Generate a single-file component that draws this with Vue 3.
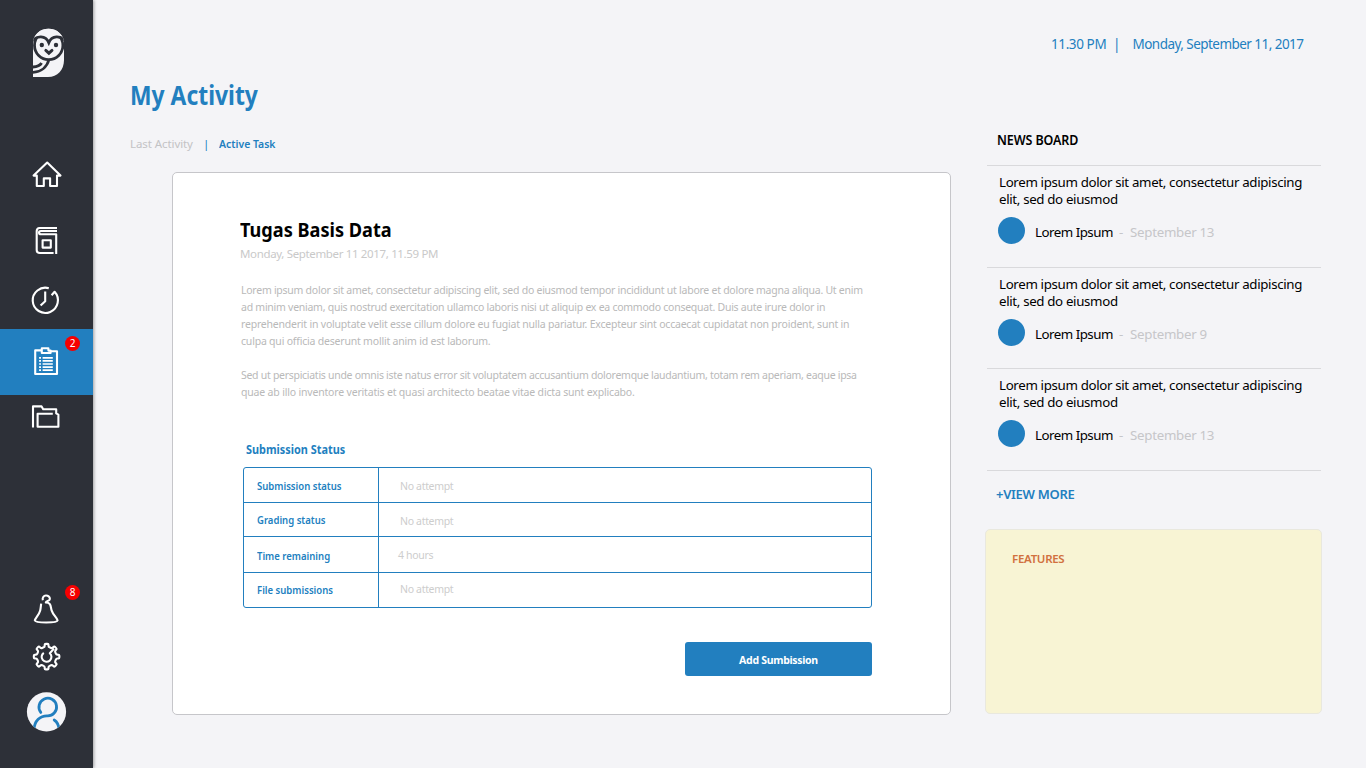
<script setup>
const nav = [
  {
    id: 'home', y: 142, h: 66,
    paths: ['M33.6 175.6L47.2 162.5L60.5 175.6H57V186H50.1V178.4H43.8V186H36.8V175.6H33.6Z']
  },
  {
    id: 'book', y: 208, h: 66,
    paths: [
      'M57 228H39.6Q36.7 228.2 36.7 231V250.2Q36.8 253 39.8 253H53.6',
      'M57 231H41Q39 231 39 232.4Q39 234.2 41 234.2H56.2V254',
      'M42.6 240.2H50.8V247.6H42.6Z'
    ]
  },
  {
    id: 'clock', y: 274, h: 55,
    paths: [
      'M48.8 288.2A12.6 12.6 0 1 0 54.6 291.8L51.6 295.2',
      'M45.2 291.6V301.2L40.6 305.6'
    ]
  },
  {
    id: 'tasks', y: 329, h: 66, active: true, badge: 2,
    paths: [
      'M41.8 350.4H35.2V374H57V351.2H50.6',
      'M41.8 353V348.2H48.4V350.6H50.6V353H41.8Z',
      'M42.6 357.8H52.8M42.6 360.9H52.8M42.6 364H52.8M42.6 367.1H52.8M42.6 370.2H52.8',
      'M39.1 357.8H41M39.1 360.9H41M39.1 364H41M39.1 367.1H41M39.1 370.2H41'
    ]
  },
  {
    id: 'files', y: 395, h: 46,
    paths: [
      'M33 427.4V406.4H41.6L43.2 409.2H56.2V413.4L58.4 414.6V426.8H37.6V413.8H52.8'
    ]
  }
]

function gear(cx, cy, teeth, ri, ro) {
  const pts = []
  const step = (Math.PI * 2) / teeth
  const at = (r, a) => [cx + r * Math.sin(a), cy - r * Math.cos(a)]
  for (let i = 0; i < teeth; i++) {
    const a = i * step
    pts.push(at(ri, a - step * 0.25), at(ro, a - step * 0.19), at(ro, a + step * 0.19), at(ri, a + step * 0.25))
  }
  const f = (p) => `${p[0].toFixed(2)} ${p[1].toFixed(2)}`
  const near = (p, q) => [p[0] + (q[0] - p[0]) * 0.3, p[1] + (q[1] - p[1]) * 0.3]
  return pts.map((p, i) => {
    const prev = pts[(i + pts.length - 1) % pts.length]
    const next = pts[(i + 1) % pts.length]
    return `${i ? 'L' : 'M'}${f(near(p, prev))}Q${f(p)} ${f(near(p, next))}`
  }).join('') + 'Z'
}

const tools = [
  {
    id: 'alerts', y: 576, h: 57, badge: 8,
    paths: [
      'M42.8 600.2C41.4 594.2 50 594.2 49.9 599C49.8 601.6 46 600.6 45.8 602.5C51.4 602.8 50.4 606.4 51.6 610.4C53 615 57.2 618 57.6 620.4C57.2 623.2 35.4 623.2 34.8 620.4C35.2 618 39 615 40.2 610.4C40.9 607.6 40.8 605.6 41.2 603.6'
    ]
  },
  {
    id: 'settings', y: 633, h: 48,
    paths: [gear(46.6, 656.6, 8, 9.9, 12.9), 'M43.8 652.8A4.9 4.9 0 1 0 49.8 653.2L54 648.6']
  }
]

const article = [
  [
    'Lorem ipsum dolor sit amet, consectetur adipiscing elit, sed do eiusmod tempor incididunt ut labore et dolore magna aliqua. Ut enim',
    'ad minim veniam, quis nostrud exercitation ullamco laboris nisi ut aliquip ex ea commodo consequat. Duis aute irure dolor in',
    'reprehenderit in voluptate velit esse cillum dolore eu fugiat nulla pariatur. Excepteur sint occaecat cupidatat non proident, sunt in',
    'culpa qui officia deserunt mollit anim id est laborum.'
  ],
  [
    'Sed ut perspiciatis unde omnis iste natus error sit voluptatem accusantium doloremque laudantium, totam rem aperiam, eaque ipsa',
    'quae ab illo inventore veritatis et quasi architecto beatae vitae dicta sunt explicabo.'
  ]
]

const rows = [
  { id: 'r1', label: 'Submission status', value: 'No attempt' },
  { id: 'r2', label: 'Grading status', value: 'No attempt' },
  { id: 'r3', label: 'Time remaining', value: '4 hours' },
  { id: 'r4', label: 'File submissions', value: 'No attempt' }
]

const news = [
  { id: 'n1', date: 'September 13' },
  { id: 'n2', date: 'September 9' },
  { id: 'n3', date: 'September 13' }
]
</script>

<template>
  <div class="app">
    <aside class="sidebar">
      <div class="logo">
        <svg width="93" height="142" viewBox="0 0 93 142">
          <clipPath id="owl">
            <path d="M33 77V43.2A15.5 14.4 0 0 1 64 43.2V60C64 70 57.5 77 48 77Z" />
          </clipPath>
          <g clip-path="url(#owl)">
            <rect x="32" y="28" width="33" height="50" fill="#f4f4f7" />
            <g fill="none" stroke="#2d3038" stroke-width="2.8">
              <circle cx="48.7" cy="45.4" r="14.2" />
              <path d="M49 59.5C47 67 41 72.4 32 72.4M41.6 63C39.8 66 37 67 32 67" />
            </g>
            <path d="M32 28H65V39C60 35.5 52 35.5 48.8 42.5C45.5 35.5 37.5 35.5 32 39Z" fill="#f4f4f7" />
            <path d="M32 40.8C37 35.6 45.5 35 48.8 42.6C52 35 60.5 35.6 65.5 40.8" fill="none" stroke="#2d3038" stroke-width="2.9" />
            <circle cx="41.8" cy="45" r="2.2" fill="#2d3038" />
            <circle cx="56" cy="45" r="2.2" fill="#2d3038" />
            <path d="M45.8 50.4L48.9 53.2L52 50.4" fill="none" stroke="#2d3038" stroke-width="2.9" stroke-linecap="round" />
          </g>
        </svg>
      </div>
      <div v-for="n in nav" :key="n.id" class="slot" :class="{ active: n.active }">
        <svg width="93" :height="n.h" :viewBox="`0 ${n.y} 93 ${n.h}`" class="line">
          <path v-for="(p, i) in n.paths" :key="p" :d="p" :class="{ fine: i > 1 && n.active }" />
        </svg>
        <span v-if="n.badge" class="badge">{{ n.badge }}</span>
      </div>
      <div class="gap"></div>
      <div v-for="n in tools" :key="n.id" class="slot">
        <svg width="93" :height="n.h" :viewBox="`0 ${n.y} 93 ${n.h}`" class="line">
          <path v-for="p in n.paths" :key="p" :d="p" />
        </svg>
        <span v-if="n.badge" class="badge bell">{{ n.badge }}</span>
      </div>
      <div class="slot">
        <svg width="93" height="87" viewBox="0 681 93 87">
          <clipPath id="av"><circle cx="46.5" cy="711.8" r="19.6" /></clipPath>
          <circle cx="46.5" cy="711.8" r="19.6" fill="#f4f4f7" />
          <g clip-path="url(#av)" fill="none" stroke="#227fbf" stroke-width="2.8" stroke-linecap="round">
            <path d="M40.8 712.4A8.8 8.8 0 1 1 47 715.8C40.5 715.8 34.2 720.5 34 730" />
            <path d="M54.2 720C56.8 721.6 58.8 725 59.2 730" />
          </g>
        </svg>
      </div>
    </aside>

    <main class="main">
      <h1 class="title"><span>My Activity</span></h1>
      <nav class="tabs">
        <span class="tab">Last Activity</span><span class="bar">|</span><span class="tab on">Active Task</span>
      </nav>
      <section class="card">
        <h2><span>Tugas Basis Data</span></h2>
        <p class="due"><span>Monday, September 11 2017, 11.59 PM</span></p>
        <div class="article">
          <p v-for="(para, i) in article" :key="i">
            <span v-for="l in para" :key="l">{{ l }}</span>
          </p>
        </div>
        <h3><span>Submission Status</span></h3>
        <div class="table">
          <div v-for="r in rows" :key="r.id" class="row" :class="r.id">
            <div class="label"><span>{{ r.label }}</span></div>
            <div class="value">{{ r.value }}</div>
          </div>
        </div>
        <button class="add">Add Sumbission</button>
      </section>
    </main>

    <aside class="side">
      <div class="now"><span class="time">11.30 PM</span><span class="sep">|</span><span class="date">Monday, September 11, 2017</span></div>
      <h4 class="board"><span>NEWS BOARD</span></h4>
      <article v-for="n in news" :key="n.id" class="news" :class="n.id">
        <div class="text">Lorem ipsum dolor sit amet, consectetur adipiscing<br>elit, sed do eiusmod</div>
        <div class="by">
          <i class="dot"></i><span class="name">Lorem Ipsum</span><span class="dash">-</span><span class="when">{{ n.date }}</span>
        </div>
      </article>
      <div class="morebox"><span class="more">+VIEW MORE</span></div>
      <section class="features"><span>FEATURES</span></section>
    </aside>
  </div>
</template>

<style>
body { background: #f4f4f7; }
</style>

<style scoped>
* { box-sizing: border-box; }
.app {
  display: flex; width: 1366px; height: 768px; overflow: hidden; background: #f4f4f7;
  font-family: "Noto Sans", "Open Sans", sans-serif; color: #000; white-space: nowrap;
}
h1, h2, h3, h4, p { margin: 0; }
.sidebar {
  width: 93px; height: 768px; background: #2d3038; display: flex; flex-direction: column;
  box-shadow: 1px 0 3px rgba(0, 0, 0, .35); flex: none;
}
svg { display: block; }
.slot { position: relative; }
.active { background: #227fbf; }
.line { fill: none; stroke: #fff; stroke-width: 2.1; stroke-linejoin: round; }
.fine { stroke-width: 1.7; }
.gap { flex: 1; }
.badge {
  position: absolute; left: 65px; top: 7px; width: 15px; height: 15px; border-radius: 50%;
  background: #f60000; color: #fff; font-size: 10px; line-height: 15px; text-align: center;
}
.badge.bell { top: 9px; }

.main { width: 858px; padding: 75px 0 0 37px; flex: none; }
.title { font-size: 26px; line-height: 40px; height: 40px; color: #227fbf; }
.title span { display: inline-block; transform: scaleX(.88); transform-origin: 0 50%; }
.tabs { display: flex; margin-top: 19px; height: 20px; line-height: 20px; font-size: 11.5px; color: #c3c3c5; }
.tab:first-child { width: 73px; letter-spacing: -.08px; }
.bar { width: 16px; color: #227fbf; }
.tab.on { color: #227fbf; font-weight: 600; transform: scaleX(.907); transform-origin: 0 50%; }

.card {
  margin: 18px 0 0 42px; width: 779px; height: 543px; background: #fff; border: 1px solid #c6c6ca;
  border-radius: 5px; padding: 42px 0 0 67px;
}
h2 { font-size: 19.5px; line-height: 30px; height: 30px; }
h2 span, h3 span { display: inline-block; transform: scaleX(.93); transform-origin: 0 50%; }
h3 span { transform: scaleX(.907); }
.due { font-size: 11.5px; line-height: 18px; height: 18px; color: #c9c9c9; letter-spacing: -.35px; }
.article { margin: 19px 0 0 1px; font-size: 10.5px; line-height: 17px; color: #b9b9b9; }
.article p + p { margin-top: 17px; }
.article span { display: block; letter-spacing: -.255px; }
.article span:nth-child(3) { letter-spacing: -.21px; }
.article span:nth-child(4) { letter-spacing: -.2px; }
.article p + p span { letter-spacing: -.285px; }
.article p + p span + span { letter-spacing: -.18px; }
h3 { margin: 40px 0 0 6px; font-size: 12px; line-height: 18px; height: 18px; color: #227fbf; }
.table { margin: 8px 0 0 3px; width: 629px; border: 1px solid #227fbf; border-radius: 3px; color: #227fbf; font-size: 10.5px; }
.row { display: flex; height: 35px; line-height: 37px; border-bottom: 1px solid #227fbf; }
.row.r2 { height: 34px; line-height: 35px; }
.row.r3 { height: 36px; line-height: 39px; }
.row.r4 { height: 34px; line-height: 35px; border: 0; }
.label { width: 135px; padding-left: 13px; font-weight: 600; border-right: 1px solid #227fbf; }
.label span { display: inline-block; transform: scaleX(.908); transform-origin: 0 50%; }
.value { padding-left: 21px; color: #cdcdcd; letter-spacing: -.32px; }
.r2 .value { line-height: 37px; }
.r3 .value { padding-left: 19px; line-height: 36px; }
.r4 .value { line-height: 33px; }
.add {
  display: block; margin: 34px 0 0 445px; width: 187px; height: 34px; border: 0; border-radius: 3px; padding: 2px 0 0;
  background: #227fbf; color: #fff; font: 700 10.5px/32px "Noto Sans", sans-serif; letter-spacing: -.3px;
}

.side { width: 336px; margin-left: 35px; flex: none; }
.now { display: flex; margin: 34px 0 0 65px; height: 20px; line-height: 20px; font-size: 13.5px; color: #227fbf; }
.time { width: 62px; letter-spacing: -.4px; }
.sep { width: 19.5px; }
.date { letter-spacing: -.54px; }
.board { margin: 76px 0 0 10.5px; font-size: 13.5px; line-height: 20px; height: 20px; font-weight: 600; }
.board span { display: inline-block; transform: scaleX(.925); transform-origin: 0 50%; letter-spacing: -.1px; }
.news { width: 334px; margin-left: 1px; border-top: 1px solid #d9d9dc; height: 102px; padding: 8px 0 0 12px; }
.news.n1 { margin-top: 15px; }
.news.n2 { height: 101px; }
.text { font-size: 13.3px; line-height: 17px; letter-spacing: -.34px; }
.by { display: flex; align-items: center; margin-top: 9px; font-size: 13.3px; line-height: 20px; }
.dot { width: 27px; height: 27px; margin-left: -1px; border-radius: 50%; background: #227fbf; }
.name { width: 84px; margin: 2px 0 0 10px; letter-spacing: -.5px; }
.dash, .when { color: #c6c6c9; margin-top: 2px; }
.dash { width: 11px; }
.when { letter-spacing: -.28px; }
.morebox { width: 334px; margin-left: 1px; border-top: 1px solid #d9d9dc; height: 59px; padding: 13px 0 0 9px; display: flex; }
.more { font-size: 13px; line-height: 20px; font-weight: 600; color: #227fbf; letter-spacing: -.3px; }
.features {
  width: 337px; height: 185px; margin-left: -1px; background: #f8f4d4; border: 1px solid #e9e8de; border-radius: 5px;
  padding: 19px 0 0 26px; font-size: 11.5px; line-height: 20px; font-weight: 600; color: #d1713f; letter-spacing: -.3px;
}
</style>
